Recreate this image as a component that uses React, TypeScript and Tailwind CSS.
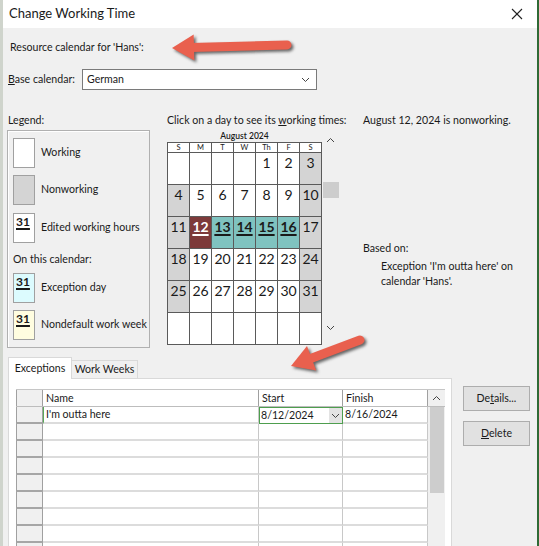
import React from "react";

type Day = number | null;

const weeks: Day[][] = [
  [null, null, null, null, 1, 2, 3],
  [4, 5, 6, 7, 8, 9, 10],
  [11, 12, 13, 14, 15, 16, 17],
  [18, 19, 20, 21, 22, 23, 24],
  [25, 26, 27, 28, 29, 30, 31],
  [null, null, null, null, null, null, null],
];

const dayNames = ["S", "M", "T", "W", "Th", "F", "S"];

const dayStyle = (d: Day, col: number) => {
  if (d === null) return "bg-white";
  if (d === 12) return "bg-[#7d3a3a] text-white font-bold underline decoration-[1.5px] underline-offset-2";
  if (d >= 13 && d <= 16) return "bg-[#7fc3c0] font-bold underline decoration-[1.5px] underline-offset-2";
  if (col === 0 || col === 6) return "bg-[#d4d4d4]";
  return "bg-white";
};

const Chevron = ({ up = false }: { up?: boolean }) => (
  <svg width="9" height="6" viewBox="0 0 9 6" className="block">
    <polyline
      points={up ? "1,5 4.5,1.5 8,5" : "1,1 4.5,4.5 8,1"}
      fill="none"
      stroke="#444"
      strokeWidth="1"
    />
  </svg>
);

const Swatch = ({ bg, num }: { bg: string; num?: boolean }) => (
  <div className={`w-[22px] h-[30px] shrink-0 border border-[#a0a0a0] pl-[2px] text-[12px] leading-[15px] font-bold ${bg}`}>
    {num && <span className="underline decoration-[1.5px] underline-offset-2">31</span>}
  </div>
);

const LegendRow = ({ bg, num, label, className = "" }: { bg: string; num?: boolean; label: string; className?: string }) => (
  <div className={`flex items-center gap-[6px] whitespace-nowrap ${className}`}>
    <Swatch bg={bg} num={num} />
    <span>{label}</span>
  </div>
);

const Arrow = ({ x1, y1, x2, y2 }: { x1: number; y1: number; x2: number; y2: number }) => {
  // tail (x1,y1) -> tip (x2,y2)
  const dx = x2 - x1;
  const dy = y2 - y1;
  const len = Math.sqrt(dx * dx + dy * dy);
  const ux = dx / len;
  const uy = dy / len;
  const bx = x2 - ux * 22;
  const by = y2 - uy * 22;
  const px = -uy * 13;
  const py = ux * 13;
  const head = `${x2},${y2} ${bx + px},${by + py} ${bx - px},${by - py}`;
  return (
    <g style={{ filter: "drop-shadow(2px 2px 1.5px rgba(40,40,40,0.7))" }}>
      <line x1={x1} y1={y1} x2={bx + ux * 3} y2={by + uy * 3} stroke="#e9604e" strokeWidth="9" strokeLinecap="round" />
      <polygon points={head} fill="#e9604e" />
    </g>
  );
};

export default function App() {
  const rows = Array.from({ length: 9 });
  return (
    <div className="flex w-[539px] h-[546px] overflow-hidden font-['Lato',sans-serif] text-[10.6px] text-[#1a1a1a]">
      <div className="w-[3px] bg-[#cfd4cc]" />
      <div className="w-[534px] flex flex-col">
        {/* title bar */}
        <div className="h-[28px] bg-white flex items-center justify-between pl-[6px] pr-[14px]">
          <span className="text-[13px]">Change Working Time</span>
          <svg width="12" height="12" viewBox="0 0 12 12">
            <line x1="1" y1="1" x2="11" y2="11" stroke="#222" strokeWidth="1.1" />
            <line x1="11" y1="1" x2="1" y2="11" stroke="#222" strokeWidth="1.1" />
          </svg>
        </div>

        <div className="relative h-[518px] bg-[#f0f0f0]">
          <div className="pt-[12px] pl-[7px] leading-[14px]">Resource calendar for 'Hans':</div>

          <div className="flex items-center mt-[15px] ml-[5px]">
            <span className="w-[74px]">
              <span className="underline">B</span>ase calendar:
            </span>
            <div className="w-[235px] h-[21px] bg-white border border-[#7a7a7a] flex items-center justify-between pl-[4px] pr-[6px]">
              <span>German</span>
              <Chevron />
            </div>
          </div>

          {/* middle */}
          <div className="flex items-start mt-[23px] h-[235px]">
            <div className="ml-[4px] w-[143px] shrink-0">
              <div className="pl-[1px] leading-[14px]">Legend:</div>
              <div className="mt-[3px] h-[218px] border border-[#b0b0b0] shadow-[inset_1px_1px_0_#fff] pt-[7px] px-[5px]">
                <LegendRow bg="bg-white" label="Working" />
                <LegendRow bg="bg-[#d4d4d4]" label="Nonworking" className="mt-[7px]" />
                <LegendRow bg="bg-white" num label="Edited working hours" className="mt-[8px]" />
                <div className="mt-[9px] leading-[14px]">On this calendar:</div>
                <LegendRow bg="bg-[#dcfbfe]" num label="Exception day" className="mt-[7px]" />
                <LegendRow bg="bg-[#fffde0]" num label="Nondefault work week" className="mt-[7px]" />
              </div>
            </div>

            <div className="ml-[17px] w-[196px] shrink-0">
              <div className="leading-[14px] whitespace-nowrap">
                Click on a day to see its <span className="underline">w</span>orking times:
              </div>
              <div className="flex">
                <div className="w-[155px]">
                  <div className="mt-[4px] h-[11px] text-center text-[8.5px] leading-[11px] font-semibold">August 2024</div>
                  <div className="grid grid-cols-[repeat(7,22px)] border-l border-t border-[#5a5a5a]">
                    {dayNames.map((n, i) => (
                      <div key={i} className="h-[10px] bg-white border-r border-b border-[#5a5a5a] text-center text-[7.5px] leading-[9px]">
                        {n}
                      </div>
                    ))}
                    {weeks.map((w, wi) =>
                      w.map((d, ci) => (
                        <div
                          key={`${wi}-${ci}`}
                          className={`h-[32px] border-r border-b border-[#5a5a5a] text-center text-[14px] leading-[18px] pt-[1px] ${dayStyle(d, ci)}`}
                        >
                          {d}
                        </div>
                      ))
                    )}
                  </div>
                </div>
                <div className="w-[17px] h-[218px] flex flex-col items-center">
                  <div className="mt-[10px]">
                    <Chevron up />
                  </div>
                  <div className="mt-[39px] w-[16px] h-[16px] bg-[#cdcdcd]" />
                  <div className="mt-[127px]">
                    <Chevron />
                  </div>
                </div>
              </div>
            </div>

            <div className="whitespace-nowrap">
              <div className="leading-[14px]">August 12, 2024 is nonworking.</div>
              <div className="mt-[114px] leading-[14px]">Based on:</div>
              <div className="mt-[4px] pl-[18px] leading-[15px]">
                Exception 'I'm outta here' on
                <br />
                calendar 'Hans'.
              </div>
            </div>
          </div>

          {/* bottom */}
          <div className="flex mt-[9px] ml-[5px]">
            <div className="w-[444px] flex flex-col">
              <div className="flex items-end h-[21px]">
                <div className="relative z-10 -mb-px w-[64px] h-[22px] bg-white border-t border-l border-r border-[#d9d9d9] flex items-center justify-center">
                  Exceptions
                </div>
                <div className="w-[66px] h-[18px] bg-[#f0f0f0] border-t border-r border-[#d9d9d9] flex items-center justify-center">
                  Work Weeks
                </div>
              </div>
              <div className="h-[168px] bg-white border border-b-0 border-[#d9d9d9] overflow-hidden">
                <div className="mt-[10px] ml-[7px] w-[429px] border-t border-[#c6c6c6]">
                  <div className="flex h-[17px] border-b border-[#bdbdbd] leading-[16px]">
                    <div className="w-[27px] bg-[#f0f0f0] border-l border-r border-[#a0a0a0]" />
                    <div className="w-[216px] pl-[3px] border-r border-[#a0a0a0]">Name</div>
                    <div className="w-[84px] pl-[3px] border-r border-[#a0a0a0]">Start</div>
                    <div className="w-[85px] pl-[3px] border-r border-[#a0a0a0]">Finish</div>
                    <div className="w-[17px] bg-[#f0f0f0] flex items-center justify-center">
                      <Chevron up />
                    </div>
                  </div>
                  <div className="flex">
                    <div className="w-[412px]">
                      {rows.map((_, i) => (
                        <div key={i} className="flex h-[17px] leading-[15px]">
                          <div className="w-[27px] bg-[#f0f0f0] border-l border-r border-b-2 border-l-[#a0a0a0] border-r-[#a0a0a0] border-b-[#a6a6a6]" />
                          {i === 0 ? (
                            <>
                              <div className="w-[216px] pl-[2px] border-l border-l-[#5aa85a] border-r border-r-[#c8c8c8] border-b-2 border-b-[#dcdcdc]">
                                I'm outta here
                              </div>
                              <div className="w-[84px] pl-[1px] border border-[#4e9e4e] flex items-center justify-between">
                                <span>8/12/2024</span>
                                <div className="w-[13px] h-[15px] bg-[#e3e3e3] flex items-center justify-center">
                                  <Chevron />
                                </div>
                              </div>
                              <div className="w-[85px] pl-[2px] border-r border-r-[#c8c8c8] border-b-2 border-b-[#dcdcdc]">8/16/2024</div>
                            </>
                          ) : (
                            <>
                              <div className="w-[216px] border-r border-r-[#c8c8c8] border-b-2 border-b-[#dcdcdc]" />
                              <div className="w-[84px] border-r border-r-[#c8c8c8] border-b-2 border-b-[#dcdcdc]" />
                              <div className="w-[85px] border-r border-r-[#c8c8c8] border-b-2 border-b-[#dcdcdc]" />
                            </>
                          )}
                        </div>
                      ))}
                    </div>
                    <div className="w-[17px] bg-[#f0f0f0]">
                      <div className="ml-[2px] w-[14px] h-[86px] bg-[#cdcdcd]" />
                    </div>
                  </div>
                </div>
              </div>
            </div>

            <div className="ml-[11px] pt-[29px] flex flex-col gap-[10px]">
              <div className="w-[67px] h-[25px] bg-[#e1e1e1] border border-[#adadad] flex items-center justify-center">
                <span>
                  De<span className="underline">t</span>ails...
                </span>
              </div>
              <div className="w-[67px] h-[25px] bg-[#e1e1e1] border border-[#adadad] flex items-center justify-center">
                <span>
                  <span className="underline">D</span>elete
                </span>
              </div>
            </div>
          </div>

          <svg className="absolute inset-0 pointer-events-none" width="534" height="518">
            <Arrow x1={284} y1={17} x2={169} y2={20} />
            <Arrow x1={357} y1={312} x2={288} y2={338} />
          </svg>
        </div>
      </div>
      <div className="w-[2px] bg-[#2f6a35]" />
    </div>
  );
}
